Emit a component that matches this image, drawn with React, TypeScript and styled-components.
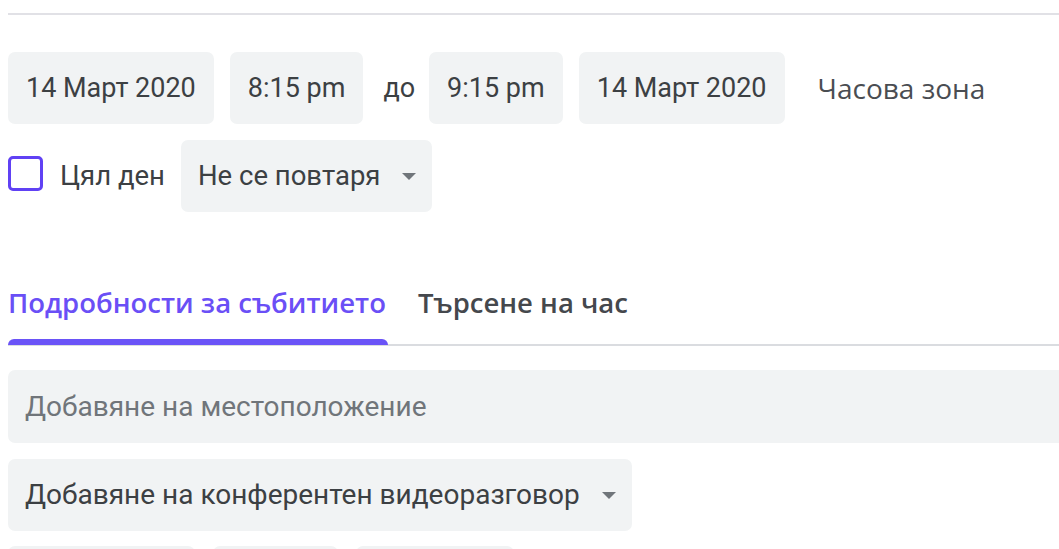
import React from 'react'
import styled, { createGlobalStyle } from 'styled-components'

const GlobalStyle = createGlobalStyle`
  html,
  body {
    margin: 0;
    padding: 0;
    background: #ffffff;
    overflow: hidden;
  }

  body {
    font-family: Roboto, 'Noto Sans', Arial, sans-serif;
    color: #3c4043;
  }
`

const Page = styled.div`
  width: 1240px;
  height: 549px;
  padding: 13px 0 0 8px;
  box-sizing: border-box;
  overflow: hidden;
`

const Divider = styled.div`
  height: 2px;
  background: #e1e1e6;
  margin-bottom: 37px;
`

const Row = styled.div<{ $mt?: number; $gap?: number }>`
  display: flex;
  align-items: center;
  gap: ${(p) => p.$gap ?? 16}px;
  margin-top: ${(p) => p.$mt ?? 0}px;
`

const Chip = styled.div<{ $width?: number; $size?: number }>`
  display: flex;
  align-items: center;
  height: 72px;
  padding: 0 18px;
  box-sizing: border-box;
  width: ${(p) => (p.$width ? `${p.$width}px` : 'auto')};
  background: #f1f3f4;
  border-radius: 7px;
  font-size: ${(p) => p.$size ?? 27}px;
  line-height: 32px;
  color: #3c4043;
  white-space: nowrap;
`

const SelectChip = styled(Chip)<{ $caretGap?: number }>`
  padding: 0 16px 0 17px;
  gap: ${(p) => p.$caretGap ?? 22}px;
`

const Caret = styled.span`
  width: 0;
  height: 0;
  border-left: 7px solid transparent;
  border-right: 7px solid transparent;
  border-top: 7px solid #70757a;
`

const Separator = styled.span`
  margin: 0 -2px 0 4px;
  font-size: 27px;
  line-height: 32px;
  color: #3c4043;
`

const TextButton = styled.span`
  padding: 0 17px;
  font-family: 'Open Sans', Roboto, sans-serif;
  font-size: 28px;
  line-height: 32px;
  color: #4a4d52;
`

const CheckLabel = styled.label`
  display: flex;
  align-items: center;
  gap: 17px;
  font-size: 27.5px;
  line-height: 32px;
  color: #3c4043;
`

const CheckBox = styled.span`
  width: 35px;
  height: 35px;
  margin-bottom: 6px;
  box-sizing: border-box;
  border: 3px solid #6041f4;
  border-radius: 5px;
`

const TabList = styled.div`
  display: flex;
  gap: 32px;
  margin-top: 58px;
  border-bottom: 2px solid #dadce0;
`

const Tab = styled.div<{ $active?: boolean }>`
  position: relative;
  padding: 17px 0 25px;
  font-family: 'Open Sans', Roboto, sans-serif;
  font-size: 27.5px;
  line-height: 32px;
  font-weight: 600;
  color: ${(p) => (p.$active ? '#6a4ff6' : '#45484d')};

  &::after {
    content: '';
    display: ${(p) => (p.$active ? 'block' : 'none')};
    position: absolute;
    left: 0;
    right: -2px;
    bottom: -1px;
    height: 6px;
    border-radius: 6px 6px 0 0;
    background: #6a53f7;
  }
`

const Field = styled.div`
  display: flex;
  align-items: center;
  height: 73px;
  margin-top: 24px;
  padding: 0 17px;
  background: #f1f3f4;
  border-radius: 7px 0 0 7px;
  font-size: 28px;
  line-height: 32px;
  color: #70757a;
`

const App: React.FC = () => {
  return (
    <>
      <GlobalStyle />
      <Page>
        <Divider />
        <Row>
          <Chip>14 Март 2020</Chip>
          <Chip>8:15 pm</Chip>
          <Separator>до</Separator>
          <Chip>9:15 pm</Chip>
          <Chip>14 Март 2020</Chip>
          <TextButton>Часова зона</TextButton>
        </Row>
        <Row $mt={16}>
          <CheckLabel>
            <CheckBox />
            Цял ден
          </CheckLabel>
          <SelectChip $size={27.5}>
            Не се повтаря
            <Caret />
          </SelectChip>
        </Row>
        <TabList>
          <Tab $active>Подробности за събитието</Tab>
          <Tab>Търсене на час</Tab>
        </TabList>
        <Field>Добавяне на местоположение</Field>
        <Row $mt={16}>
          <SelectChip $size={28}>
            Добавяне на конферентен видеоразговор
            <Caret />
          </SelectChip>
        </Row>
        <Row $mt={15} $gap={18}>
          <Chip $width={187} />
          <Chip $width={125} />
          <Chip $width={158} />
        </Row>
      </Page>
    </>
  )
}

export default App
